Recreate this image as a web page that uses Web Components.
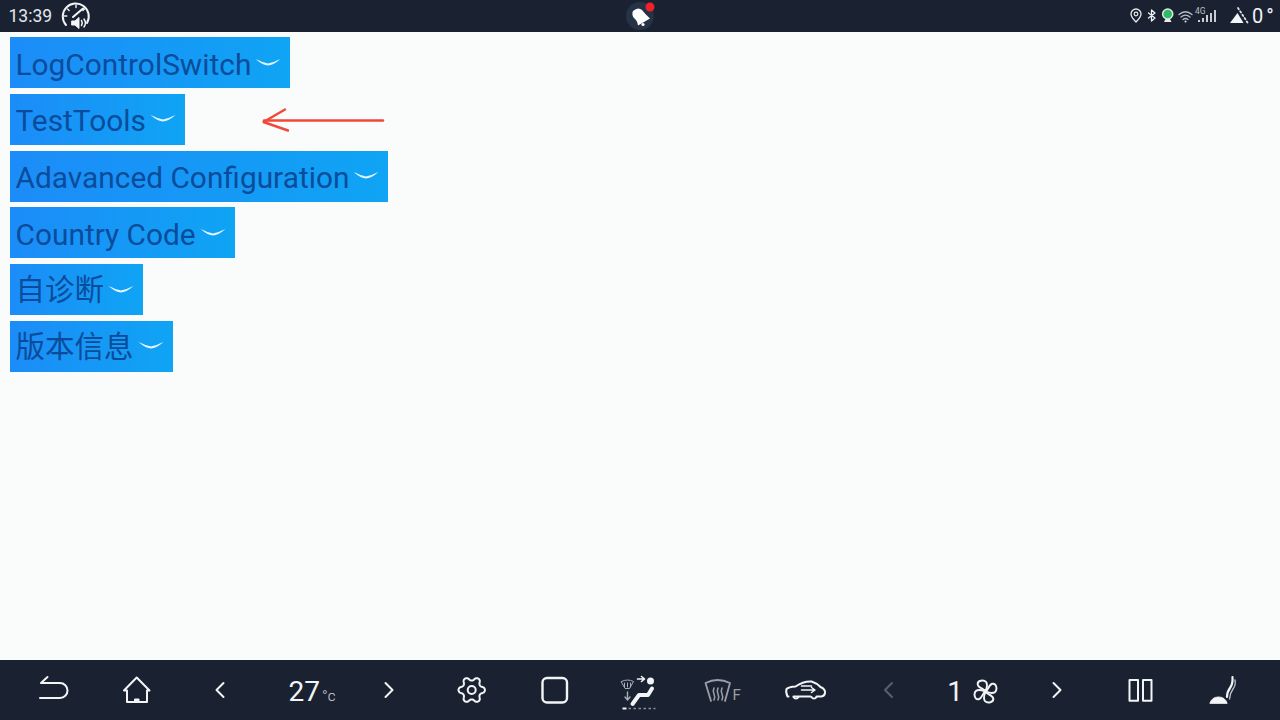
<!DOCTYPE html>
<html lang="zh">
<head>
<meta charset="utf-8">
<title>Test Tools</title>
<style>
html,body{margin:0;padding:0;width:1280px;height:720px;overflow:hidden;background:#fafbfb}
body{display:flex;flex-direction:column;font-family:Roboto,"Noto Sans CJK SC",sans-serif}
</style>
</head>
<body>
<status-bar></status-bar>
<main-page>
  <menu-button>LogControlSwitch</menu-button>
  <menu-button>TestTools</menu-button>
  <menu-button>Adavanced Configuration</menu-button>
  <menu-button>Country Code</menu-button>
  <menu-button cjk>自诊断</menu-button>
  <menu-button cjk>版本信息</menu-button>
</main-page>
<nav-bar></nav-bar>

<template id="status-tpl">
<style>
:host{display:grid;grid-template-columns:1fr auto 1fr;align-items:center;height:32px;flex:none;background:#1a2231;color:#e4e7ec;font-family:Roboto,sans-serif}
.left{display:flex;align-items:center;padding-left:8.500px;gap:9px}
.time{font-size:17.500px}
.right{display:flex;align-items:center;justify-content:flex-end;padding-right:8px;gap:2px}
.temp{font-size:20px;font-weight:400;letter-spacing:3px;color:#f1f3f5;width:20px;white-space:nowrap}
svg{display:block}
</style>
<div class="left">
  <span class="time">13:39</span>
  <svg width="30" height="32" viewBox="61 0 30 32" fill="none" stroke="#f2f4f6" stroke-linecap="round" stroke-linejoin="round">
    <path d="M66 25 A13 13 0 1 1 87 23" stroke-width="2"/>
    <path d="M76 5v2.500M67.500 9l1.600 1.600M64.500 16h2.300M84.500 9l-1.600 1.600" stroke-width="1.400"/>
    <path d="M73 17 L83 8.500" stroke-width="2"/>
    <path d="M72 21h3l4-3.500v11l-4-3.500h-3z" fill="#f2f4f6" stroke-width="1"/>
    <path d="M81.500 20.500q1.500 2.500 0 5M84 19q2.800 4 0 8" stroke-width="1.500"/>
  </svg>
</div>
<svg width="34" height="32" viewBox="623 0 34 32">
  <circle cx="640" cy="16" r="14" fill="#263246"/>
  <path d="M633 11 Q638 6.500 642 10 Q645 14 650 18.500 L638 25.500 Q637.500 20.500 633.500 17.500 Q631.500 14 633 11Z" fill="#fff"/>
  <circle cx="643" cy="24.500" r="1.600" fill="#fff"/>
  <circle cx="650" cy="7" r="4.500" fill="#f0212b"/>
</svg>
<div class="right">
  <svg width="125" height="32" viewBox="1125 0 125 32" fill="none" stroke-linecap="round" stroke-linejoin="round">
    <path d="M1136 22 Q1131 17 1131 14 A5 5 0 0 1 1141 14 Q1141 17 1136 22Z" stroke="#e6e9ed" stroke-width="1.300"/>
    <circle cx="1136" cy="14" r="1.800" stroke="#e6e9ed" stroke-width="1.200"/>
    <path d="M1148.500 13 L1155 18 L1151.500 21 V10 L1155 13 L1148.500 18" stroke="#f0f2f4" stroke-width="1.300"/>
    <circle cx="1167.700" cy="14" r="5.800" fill="#dfe7e4"/>
    <circle cx="1167.700" cy="14" r="4.300" fill="#2cbc63"/>
    <path d="M1164 22h7.500l-1.500-3h-4.500z" fill="#e6e9ed"/>
    <path d="M1179 14.500q6.500-5.500 13 0M1181 17q4.500-3.800 9 0M1183 19.500q2.500-2 5 0" stroke="#b7bcc4" stroke-width="1.300"/>
    <circle cx="1185.500" cy="21.500" r="1" fill="#e6e9ed"/>
    <text x="1195" y="13.500" font-family="Roboto,sans-serif" font-size="8.500" fill="#b7bcc4">4G</text>
    <path d="M1199 22v-2M1203 22v-4M1207 22v-7M1211 22v-9M1215 22V10" stroke="#c9cdd3" stroke-width="2" stroke-linecap="butt"/>
    <path d="M1230 23 L1237.500 13 L1243.500 23Z" fill="#f4f5f7"/>
    <path d="M1238 8 L1247.500 22.500" stroke="#dfe2e6" stroke-width="1.800" stroke-dasharray="1.500 2.500"/>
  </svg>
  <span class="temp">0°</span>
</div>
</template>

<template id="page-tpl">
<style>
:host{display:flex;flex:1;flex-direction:column;align-items:flex-start;gap:5.800px;padding:5px 0 0 10px;box-sizing:border-box;position:relative;background:#fafbfb;min-height:0}
.note{position:absolute;left:255px;top:70px}
</style>
<slot></slot>
<svg class="note" width="135" height="36" viewBox="255 102 135 36" fill="none" stroke="#f2483b" stroke-width="2.400" stroke-linecap="round" stroke-linejoin="round">
  <path d="M383 120.500 H264"/>
  <path d="M285 109.500 L263.500 122 L288 130.500"/>
</svg>
</template>

<template id="btn-tpl">
<style>
:host{display:inline-flex;align-items:center;height:51px;padding:0 9px 0 5.500px;box-sizing:border-box;background:linear-gradient(90deg,#1c8cf8,#0fa4f4);color:#0b4c9a;font:400 29.850px/1 Roboto,"Noto Sans CJK SC",sans-serif;white-space:nowrap}
:host([cjk]){font-size:29.500px}
.t{position:relative;top:2px}
:host([cjk]) .t{top:1px}
svg{margin-left:4px;flex:none;position:relative;top:-1px}
</style>
<span class="t"><slot></slot></span>
<svg width="26" height="10" viewBox="0 0 26 10"><path fill="#e3f6ff" d="M.5 2 Q8 5.500 13 6.500 Q18 5.500 25.500 2 Q18 8.500 13 8.500 Q8 8.500 .5 2Z"/></svg>
</template>

<template id="nav-tpl">
<style>
:host{display:grid;grid-template-columns:repeat(15,83.500px);height:60px;flex:none;padding-left:11.250px;box-sizing:border-box;background:#1a2231;color:#f2f4f6;font-family:Roboto,sans-serif;align-items:center;justify-items:center}
svg{display:block;fill:none;stroke:#f2f4f6;stroke-width:2;stroke-linecap:round;stroke-linejoin:round}
.temp{display:flex;align-items:baseline;padding-left:17px;font-size:28px;font-weight:400;position:relative;top:1px}
.temp small{font-size:15px;margin-left:2px;color:#d3d6db;font-weight:300}
.speed{display:flex;align-items:center;gap:10px;font-size:28px;font-weight:400;position:relative;top:1px;left:1px}
.f{font:400 15px Roboto,sans-serif;fill:#9a9fa7;stroke:none}
</style>
<svg width="60" height="60" viewBox="23 660 60 60"><path d="M47.500 677 L41 683 H60 A7.500 7.500 0 0 1 60 698 H40"/></svg>
<svg width="60" height="60" viewBox="107 660 60 60"><path d="M124 690.500 L136.700 677.500 L149.500 690.500 H147 V702 H127 V690.500Z"/><path d="M134.500 702v-3h4.500v3" fill="#f2f4f6" stroke-width="1"/></svg>
<svg width="60" height="60" viewBox="190.500 660 60 60"><path d="M224 683 L217 690 L224 697"/></svg>
<div class="temp"><span>27</span><small>°c</small></div>
<svg width="60" height="60" viewBox="357.500 660 60 60"><path d="M386 683 L393 690 L386 697"/></svg>
<svg width="60" height="60" viewBox="441 660 60 60"><path id="gearp"/><circle cx="471.700" cy="690" r="4"/></svg>
<svg width="60" height="60" viewBox="524.500 660 60 60"><rect x="543" y="678" width="24.500" height="24.500" rx="4.500" stroke-width="2.400"/></svg>
<svg width="60" height="60" viewBox="607.500 660 60 60">
  <path d="M621 681.500 Q627 678.500 633 681.500 L629 688.500 H625Z M624 683v4M627 683v4M630 683v4" stroke="#a9aeb6" stroke-width="1"/>
  <path d="M627 692v7M624.500 697l2.500 3 2.500-3" stroke="#a9aeb6" stroke-width="1.400"/>
  <path d="M637 679h6M641 676.500l3 2.500-3 2.500" stroke-width="1.600"/>
  <circle cx="650" cy="681" r="3.500" fill="#f2f4f6" stroke="none"/>
  <path d="M632 704 L638.500 695 H647.500 L651.500 688.500" stroke-width="4"/>
  <path d="M622 708.500h4" stroke-width="2" stroke-linecap="butt"/>
  <path d="M628 708.500h27" stroke="#8b9099" stroke-width="1.500" stroke-dasharray="2.500 2.500" stroke-linecap="butt"/>
</svg>
<svg width="60" height="60" viewBox="691 660 60 60">
  <path d="M705.500 683 Q717.500 677 730 683 L725 701 M705.500 683 L711 701" stroke="#9a9fa7" stroke-width="1.800"/>
  <path d="M714 688q-1.500 3 0 6t0 6M718 688q-1.500 3 0 6t0 6M722 688q-1.500 3 0 6t0 6" stroke="#9a9fa7" stroke-width="1.600"/>
  <text class="f" x="732.500" y="699.500">F</text>
</svg>
<svg width="60" height="60" viewBox="774.500 660 60 60">
  <path d="M787 696.500 Q785 692 786 689 Q788 687 795 686.500 Q803 681 811 681.500 Q816 683 820 687 Q825 689 824.500 693 Q824 696 821 696.500 H816 M810 696.500 H793 M787 696.500 H788" stroke-width="2"/>
  <path d="M793 697a2.800 2.800 0 0 0 5 0M811 697a2.800 2.800 0 0 0 5 0" stroke-width="1.800"/>
  <path d="M801 686 H811 M801 690 H814 M811 687.500 L814.500 690 L811 692.500" stroke-width="1.500"/>
</svg>
<svg width="60" height="60" viewBox="858 660 60 60" style="stroke:#59606c"><path d="M892 683 L885 690 L892 697"/></svg>
<div class="speed"><span>1</span>
  <svg width="25" height="25" viewBox="-13 -13 26 26" stroke-width="2.200">
    <path d="M0 0 C-1 -3 -7 -3 -8 -7 C-9 -11.500 -2 -12.500 0.500 -10 C3 -7 1 -3 0 0Z"/>
    <path transform="rotate(90)" d="M0 0 C-1 -3 -7 -3 -8 -7 C-9 -11.500 -2 -12.500 0.500 -10 C3 -7 1 -3 0 0Z"/>
    <path transform="rotate(180)" d="M0 0 C-1 -3 -7 -3 -8 -7 C-9 -11.500 -2 -12.500 0.500 -10 C3 -7 1 -3 0 0Z"/>
    <path transform="rotate(270)" d="M0 0 C-1 -3 -7 -3 -8 -7 C-9 -11.500 -2 -12.500 0.500 -10 C3 -7 1 -3 0 0Z"/>
  </svg>
</div>
<svg width="60" height="60" viewBox="1025 660 60 60"><path d="M1053.500 683 L1060.500 690 L1053.500 697"/></svg>
<svg width="60" height="60" viewBox="1108.500 660 60 60"><rect x="1129" y="680" width="8.500" height="20.700"/><rect x="1142.500" y="680" width="8.500" height="20.700"/></svg>
<svg width="60" height="60" viewBox="1192 660 60 60">
  <path d="M1210 703 Q1212 697 1218.500 697 Q1225 697 1227 703Z" fill="#f2f4f6" stroke-width="1"/>
  <path d="M1227 697 Q1227 692 1230 688 Q1233 684 1232.500 677" stroke-width="2.200"/>
  <path d="M1229.500 699 Q1230 693 1233 689 Q1236 685 1235 680" stroke="#b9bec6" stroke-width="1.400"/>
</svg>
</template>

<script>
class Base extends HTMLElement{
  constructor(){
    super();
    const id=this.constructor.tpl;
    this.attachShadow({mode:'open'}).appendChild(document.getElementById(id).content.cloneNode(true));
  }
}
class StatusBar extends Base{static tpl='status-tpl'}
class MainPage extends Base{static tpl='page-tpl'}
class MenuButton extends Base{static tpl='btn-tpl'}
class NavBar extends Base{
  static tpl='nav-tpl';
  connectedCallback(){
    let d='';
    for(let i=0;i<144;i++){
      const a=i/144*Math.PI*2,c=Math.cos(6*a),r=11.300+1.900*Math.sign(c)*Math.pow(Math.abs(c),.7);
      d+=(i?'L':'M')+(471.700+r*Math.cos(a)).toFixed(2)+' '+(690+r*Math.sin(a)).toFixed(2);
    }
    this.shadowRoot.getElementById('gearp').setAttribute('d',d+'Z');
  }
}
customElements.define('status-bar',StatusBar);
customElements.define('main-page',MainPage);
customElements.define('menu-button',MenuButton);
customElements.define('nav-bar',NavBar);
</script>
</body>
</html>
